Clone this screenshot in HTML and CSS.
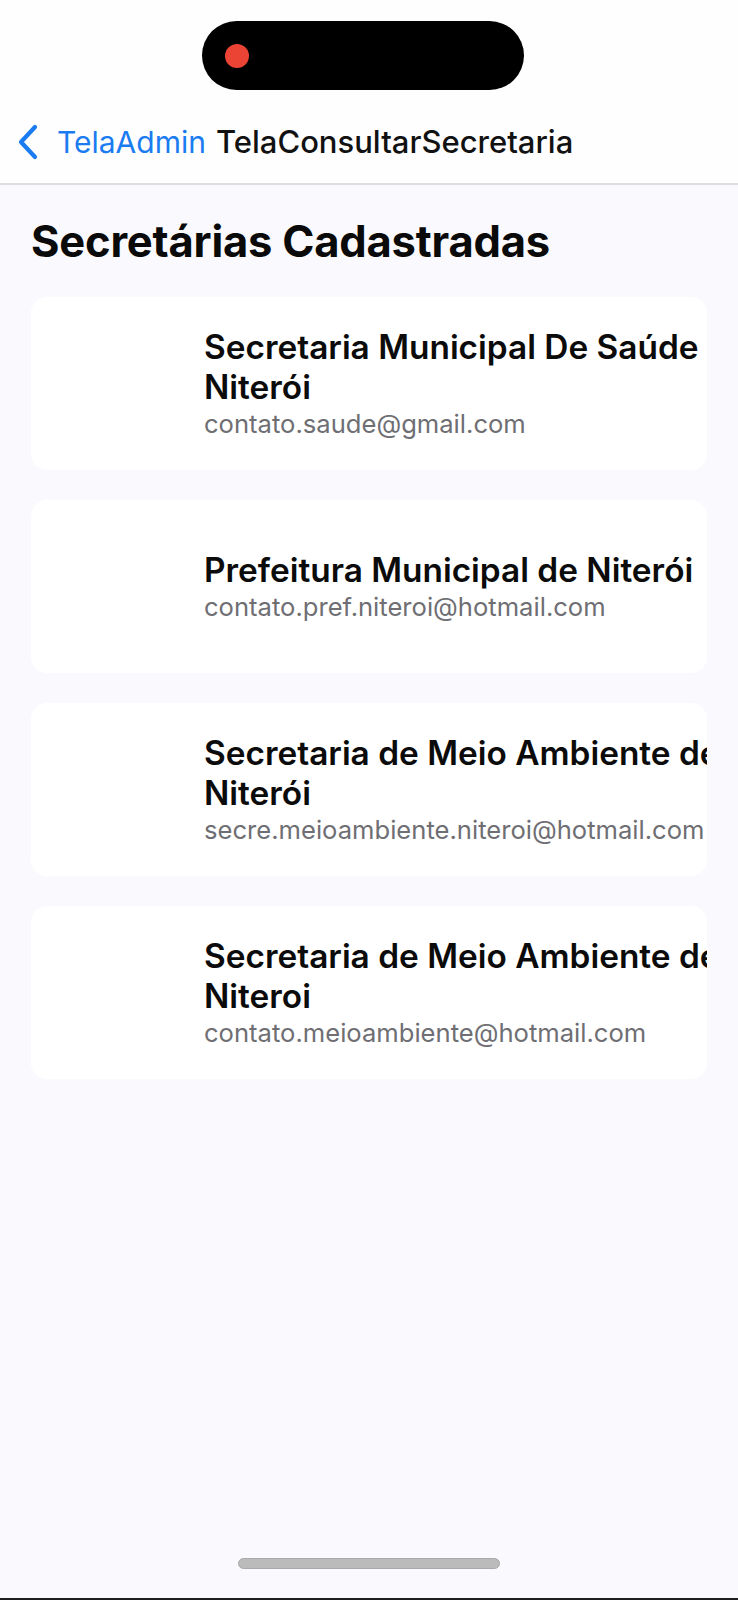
FILE: index.html
```html
<!DOCTYPE html>
<html lang="pt-BR">
<head>
<meta charset="utf-8">
<title>TelaConsultarSecretaria</title>
<link rel="stylesheet" href="styles.css">
</head>
<body>
<div class="screen">
  <header class="topbar">
    <div class="status">
      <div class="island"><span class="rec"></span></div>
    </div>
    <nav class="nav">
      <svg class="chev" width="24" height="36" viewBox="0 0 24 36" aria-hidden="true">
        <path d="M19 3 L5 18 L19 33" fill="none" stroke="#1a7cf0" stroke-width="4.2" stroke-linecap="round" stroke-linejoin="round"/>
      </svg>
      <span class="back">TelaAdmin</span>
      <span class="title">TelaConsultarSecretaria</span>
    </nav>
  </header>
  <main class="content">
    <h1 class="heading">Secretárias Cadastradas</h1>
    <ul class="list">
      <li class="card">
        <div class="thumb"></div>
        <div class="info">
          <div class="name">Secretaria Municipal De Saúde de Niterói</div>
          <div class="mail">contato.saude@gmail.com</div>
        </div>
      </li>
      <li class="card">
        <div class="thumb"></div>
        <div class="info">
          <div class="name">Prefeitura Municipal de Niterói</div>
          <div class="mail">contato.pref.niteroi@hotmail.com</div>
        </div>
      </li>
      <li class="card">
        <div class="thumb"></div>
        <div class="info">
          <div class="name">Secretaria de Meio Ambiente de Niterói</div>
          <div class="mail">secre.meioambiente.niteroi@hotmail.com</div>
        </div>
      </li>
      <li class="card">
        <div class="thumb"></div>
        <div class="info">
          <div class="name">Secretaria de Meio Ambiente de Niteroi</div>
          <div class="mail">contato.meioambiente@hotmail.com</div>
        </div>
      </li>
    </ul>
  </main>
  <footer class="home"><span class="indicator"></span></footer>
</div>
</body>
</html>
```
FILE: styles.css
```css
* { box-sizing: border-box; }
html, body { margin: 0; padding: 0; }
body {
  background: #faf9fd;
  font-family: Inter, "Noto Sans", "Liberation Sans", sans-serif;
  color: #0a0a0a;
}
.screen {
  width: 738px;
  height: 1600px;
  display: flex;
  flex-direction: column;
  background: #faf9fd;
  border-bottom: 2px solid #1e1e1e;
  overflow: hidden;
}
.topbar {
  background: #fefefe;
  border-bottom: 2px solid #dedde2;
}
.status {
  height: 110px;
  padding-top: 21px;
  display: flex;
  justify-content: center;
}
.island {
  width: 322px;
  height: 69px;
  margin-right: 12px;
  background: #000;
  border-radius: 35px;
  display: flex;
  align-items: center;
  padding-left: 23px;
}
.rec {
  width: 24px;
  height: 24px;
  border-radius: 50%;
  background: #ec4434;
}
.nav {
  height: 73px;
  display: flex;
  align-items: center;
  padding-left: 16px;
  padding-bottom: 10px;
  font-size: 30px;
}
.chev { display: block; margin-right: 17px; }
.back { color: #1a7cf0; margin-right: 10px; }
.title { color: #111; font-weight: 500; font-size: 31px; }
.content {
  flex: 1;
  padding: 31px 31px 0 31px;
}
.heading {
  margin: 0 0 31px 0;
  font-size: 43.5px;
  line-height: 50px;
  font-weight: 700;
  letter-spacing: -0.2px;
}
.list {
  list-style: none;
  margin: 0;
  padding: 0;
  display: flex;
  flex-direction: column;
  gap: 30px;
}
.card {
  height: 173px;
  background: #fff;
  border-radius: 16px;
  overflow: hidden;
  display: flex;
  align-items: center;
}
.thumb {
  flex: none;
  width: 173px;
  height: 173px;
}
.info {
  flex: none;
  width: 590px;
}
.name {
  font-size: 33.4px;
  line-height: 40px;
  font-weight: 600;
  color: #0b0b0b;
}
.mail {
  font-size: 25.6px;
  line-height: 34px;
  color: #6e6e73;
}
.home {
  height: 40px;
  display: flex;
  justify-content: center;
  align-items: flex-start;
}
.indicator {
  width: 262px;
  height: 11px;
  border-radius: 6px;
  background: #bbbbbb;
  border: 1px solid #a9a9a9;
}
```
